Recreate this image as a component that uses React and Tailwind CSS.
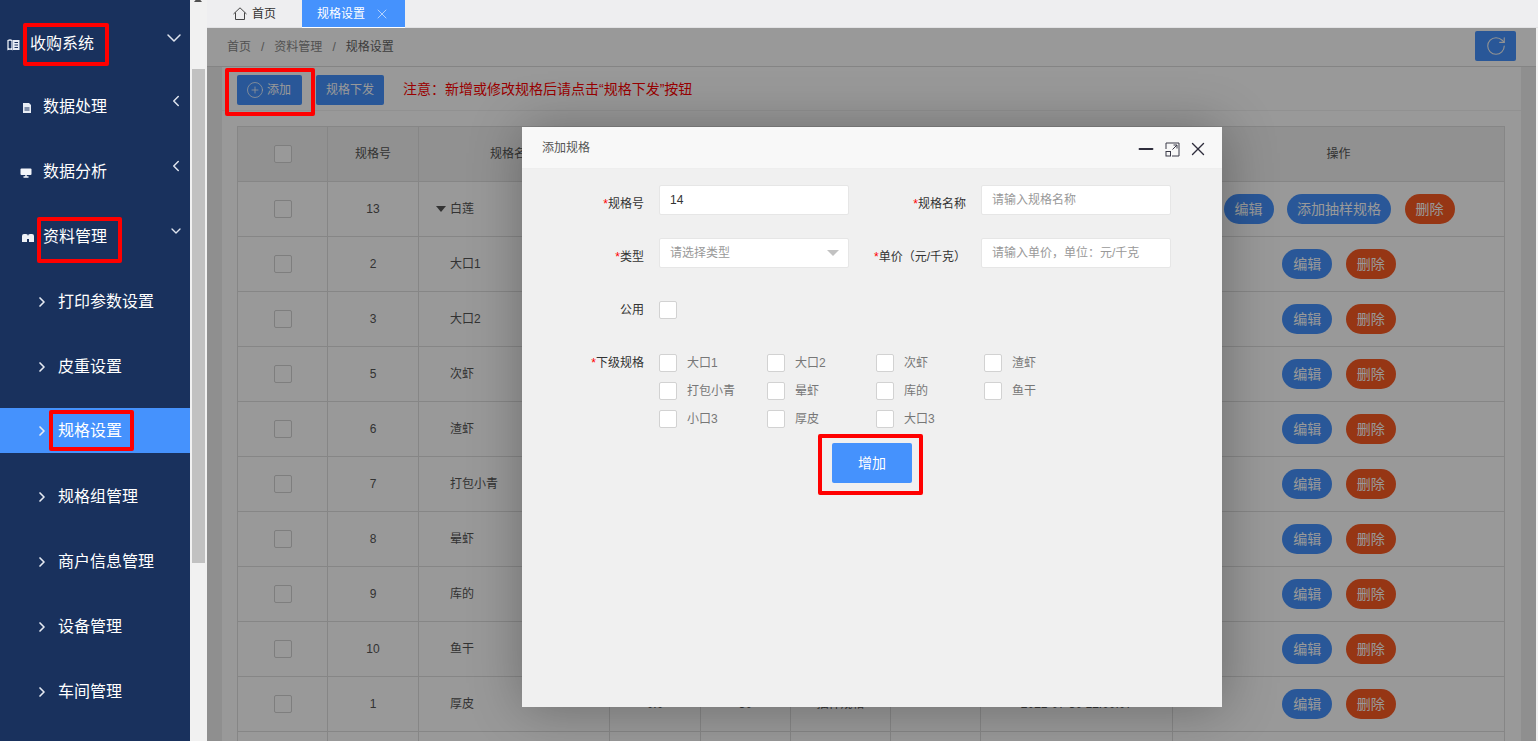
import { ChevronDown, ChevronLeft, ChevronRight, X, CirclePlus, RotateCw, Minus } from 'lucide-react';

const font = "font-['Liberation_Sans','Noto_Sans_CJK_SC',sans-serif]";

const subMenu = ['打印参数设置', '皮重设置', '规格设置', '规格组管理', '商户信息管理', '设备管理', '车间管理'];

const rows = [
  { no: '13', name: '白莲', tree: true, extra: true },
  { no: '2', name: '大口1' },
  { no: '3', name: '大口2' },
  { no: '5', name: '次虾' },
  { no: '6', name: '渣虾' },
  { no: '7', name: '打包小青' },
  { no: '8', name: '晕虾' },
  { no: '9', name: '库的' },
  { no: '10', name: '鱼干' },
  { no: '1', name: '厚皮', price: '0.0', weight: '50', kind: '抽样规格', time: '2021-07-30 12:00:07' },
  { no: '', name: '' },
];

const children = ['大口1', '大口2', '次虾', '渣虾', '打包小青', '晕虾', '库的', '鱼干', '小口3', '厚皮', '大口3'];

function MenuIcon({ type }) {
  if (type === 'book') {
    return (
      <svg width="13" height="12" viewBox="0 0 13 12" fill="none" className="shrink-0">
        <path d="M1 1.5q2-1 4 0v9q-2-1-4 0z" stroke="#e8edf5" strokeWidth="1.3" />
        <rect x="6" y="1" width="6.5" height="10" fill="#e8edf5" />
        <path d="M7.5 3.5h3.5M7.5 6h3.5M7.5 8.5h3.5" stroke="#19315d" />
      </svg>
    );
  }
  if (type === 'file') {
    return (
      <svg width="10" height="10" viewBox="0 0 10 10" className="shrink-0">
        <path d="M1 0h6l2 2v8H1z" fill="#e8edf5" />
        <path d="M2.5 5h5M2.5 7h5" stroke="#19315d" />
      </svg>
    );
  }
  if (type === 'screen') {
    return (
      <svg width="12" height="10" viewBox="0 0 12 10" className="shrink-0">
        <rect x="0.5" y="0.5" width="11" height="6.5" rx="1" fill="#f4f6fa" />
        <path d="M3.5 9h5M6 7v2" stroke="#f4f6fa" strokeWidth="1.4" />
      </svg>
    );
  }
  return (
    <svg width="14" height="10" viewBox="0 0 14 10" className="shrink-0">
      <path d="M1 9V3q0-2 2-2h2q2 0 2 2q0-2 2-2h2q2 0 2 2v6H8V6H6v3z" fill="#eef1f6" />
    </svg>
  );
}

function RedBox({ className, children }) {
  return <div className={`border-[4px] border-[#f00] rounded-[2px] ${className}`}>{children}</div>;
}

function Sidebar() {
  return (
    <aside className="w-[190px] h-full shrink-0 bg-[#19315d] text-white overflow-hidden">
      <div className="h-[74px] pt-[14px] flex items-center relative">
        <div className="ml-[7px] mr-[10px] mt-[1px]"><MenuIcon type="book" /></div>
        <span className="text-[16px]">收购系统</span>
        <ChevronDown size={24} strokeWidth={1.5} className="absolute left-[162px] top-[26px] text-[#dfe4ee]" />
      </div>
      {[
        ['file', '数据处理'],
        ['screen', '数据分析'],
      ].map(([icon, label]) => (
        <div key={label} className="h-[65px] flex items-center relative">
          <div className="w-[43px] flex justify-end pr-[11px] mt-[2px]"><MenuIcon type={icon} /></div>
          <span className="text-[16px]">{label}</span>
          <ChevronLeft size={18} strokeWidth={2} className="absolute left-[167px] top-[18px] text-[#dfe4ee]" />
        </div>
      ))}
      <div className="h-[65px] flex items-center relative">
        <div className="w-[43px] flex justify-end pr-[8px] mt-[2px]"><MenuIcon type="car" /></div>
        <span className="text-[16px]">资料管理</span>
        <ChevronDown size={16} strokeWidth={2} className="absolute left-[168px] top-[19px] text-[#dfe4ee]" />
      </div>
      {subMenu.map((label, i) => (
        <div key={label} className={`h-[65px] ${i === 2 ? 'pt-[9px]' : ''}`}>
          <div className={`flex items-center ${i === 2 ? 'h-[45px] bg-[#4592fd]' : 'h-[65px]'}`}>
            <ChevronRight size={16} strokeWidth={2.5} className="ml-[34px] mr-[8px] text-[#e6eaf2]" />
            <span className="text-[16px]">{label}</span>
          </div>
        </div>
      ))}
    </aside>
  );
}

function Pill({ color, children, className = '' }) {
  return (
    <button className={`h-[30px] rounded-[15px] text-[14px] text-white ${color} ${className}`}>{children}</button>
  );
}

function Check() {
  return <span className="block w-[18px] h-[18px] rounded-[2px] border shrink-0 bg-white border-[#d2d2d2]" />;
}

function SpecTable() {
  const cell = 'border-r border-b border-[#e0e0e0] flex items-center justify-center';
  return (
    <div className="border-l border-t border-[#e0e0e0] w-[1268px] text-[12px] text-[#555]">
      <div className="flex h-[55px] bg-[#f2f2f2]">
        <div className={`${cell} w-[90px]`}><Check /></div>
        <div className={`${cell} w-[91px]`}>规格号</div>
        <div className={`${cell} w-[191px]`}>规格名称</div>
        <div className={`${cell} w-[91px]`}>单价</div>
        <div className={`${cell} w-[90px]`}>重量</div>
        <div className={`${cell} w-[100px]`}>类型</div>
        <div className={`${cell} w-[90px]`}>公用</div>
        <div className={`${cell} w-[192px]`}>创建时间</div>
        <div className={`${cell} flex-1`}>操作</div>
      </div>
      {rows.map((r, i) => (
        <div key={i} className="flex h-[55px] bg-white">
          <div className={`${cell} w-[90px]`}><Check /></div>
          <div className={`${cell} w-[91px]`}>{r.no}</div>
          <div className={`${cell} w-[191px] !justify-start pl-[17px]`}>
            {r.tree
              ? <span className="w-0 h-0 mr-[4px] border-x-[5px] border-t-[6px] border-x-transparent border-t-[#555]" />
              : <span className="w-[14px]" />}
            <span>{r.name}</span>
          </div>
          <div className={`${cell} w-[91px]`}>{r.price}</div>
          <div className={`${cell} w-[90px]`}>{r.weight}</div>
          <div className={`${cell} w-[100px]`}>{r.kind}</div>
          <div className={`${cell} w-[90px]`} />
          <div className={`${cell} w-[192px]`}>{r.time}</div>
          <div className={`${cell} flex-1 gap-[13.5px] pl-[1px]`}>
            {r.no && <Pill color="bg-[#4592fd]" className="w-[50px]">编辑</Pill>}
            {r.extra && <Pill color="bg-[#4592fd]" className="w-[104px]">添加抽样规格</Pill>}
            {r.no && <Pill color="bg-[#fb5a22]" className="w-[50px]">删除</Pill>}
          </div>
        </div>
      ))}
    </div>
  );
}

function Field({ label, required, labelWidth, children }) {
  return (
    <div className="flex items-center">
      <label className={`${labelWidth} text-right text-[12px] text-[#333] whitespace-nowrap pt-[8px]`}>
        {required && <span className="text-[#f00]">*</span>}
        {label}
      </label>
      {children}
    </div>
  );
}

function TextBox({ value, placeholder, select }) {
  return (
    <div className={`ml-[15px] w-[190px] h-[30px] bg-white border border-[#e6e6e6] rounded-[2px] pl-[10px] flex items-center text-[12px] relative ${value ? 'text-[#333]' : 'text-[#999]'}`}>
      {value || placeholder}
      {select && <span className="absolute right-[9px] top-[11px] w-0 h-0 border-x-[6px] border-t-[6px] border-x-transparent border-t-[#c2c2c2]" />}
    </div>
  );
}

function Dialog() {
  return (
    <div className="absolute left-[315px] top-[99px] w-[700px] h-[580px] bg-[#f0f0f0] shadow-[1px_1px_50px_rgba(0,0,0,0.3)]">
      <div className="h-[42px] bg-[#f8f8f8] border-b border-[#eee] flex items-center pl-[20px] text-[12px] text-[#555] relative">
        添加规格
        <div className="absolute left-[613px] top-[11px] flex items-center text-[#2e2d3c]">
          <Minus size={22} strokeWidth={2.2} />
          <svg width="15" height="15" viewBox="0 0 15 15" fill="none" stroke="#3a3a48" strokeWidth="1" className="ml-[8px] mr-[7px]">
            <path d="M1 7V1h13v13H7" />
            <rect x="1" y="9.5" width="4.5" height="4.5" />
            <path d="M7.5 7.5L12 3M8.5 3H12v3.5" />
          </svg>
          <X size={22} strokeWidth={1.5} />
        </div>
      </div>
      <div className="pt-[16px]">
        <div className="flex h-[30px]">
          <Field label="规格号" required labelWidth="w-[122px]"><TextBox value="14" /></Field>
          <Field label="规格名称" required labelWidth="w-[117px]"><TextBox placeholder="请输入规格名称" /></Field>
        </div>
        <div className="flex h-[30px] mt-[23px]">
          <Field label="类型" required labelWidth="w-[122px]"><TextBox placeholder="请选择类型" select /></Field>
          <Field label="单价（元/千克）" required labelWidth="w-[117px]"><TextBox placeholder="请输入单价，单位：元/千克" /></Field>
        </div>
        <div className="flex items-center mt-[33px] h-[18px]">
          <label className="w-[122px] text-right text-[12px] text-[#333]">公用</label>
          <div className="ml-[15px]"><Check /></div>
        </div>
        <div className="flex mt-[35px]">
          <label className="w-[122px] text-right text-[12px] text-[#333] leading-[18px] whitespace-nowrap">
            <span className="text-[#f00]">*</span>下级规格
          </label>
          <div className="ml-[15px] grid grid-cols-[108px_109px_108px_108px] gap-y-[10px]">
            {children.map((c) => (
              <div key={c} className="flex items-center gap-[10px] text-[12px] text-[#777] leading-[18px]">
                <Check />
                {c}
              </div>
            ))}
          </div>
        </div>
        <div className="flex justify-center mt-[15px]">
          <button className="w-[80px] h-[40px] rounded-[2px] bg-[#4592fd] text-white text-[14px]">增加</button>
        </div>
      </div>
    </div>
  );
}

export default function App() {
  return (
    <div className={`${font} w-[1538px] h-[741px] flex overflow-hidden relative bg-white`}>
      <Sidebar />
      {/* outer scrollbar */}
      <div className="w-[17px] h-full shrink-0 bg-[#f1f1f1] relative">
        <div className="absolute top-[-3px] left-[4px] w-0 h-0 border-x-[4px] border-b-[5px] border-x-transparent border-b-[#505050]" />
        <div className="absolute left-[2px] top-[69px] w-[13px] h-[494px] bg-[#c1c1c1]" />
      </div>
      <div className="flex-1 min-w-0 h-full flex flex-col">
        <div className="h-[28px] bg-[#eeeef0] border-b border-[#e2e2e4] flex text-[12px] shrink-0">
          <div className="w-[95px] h-[27px] flex items-center pl-[26px] gap-[5px] text-[#333]">
            <svg width="14" height="13" viewBox="0 0 14 13" fill="none" stroke="#444" strokeWidth="1">
              <path d="M0.5 7L7 0.8L13.5 7" />
              <path d="M2.5 5.5v7h9v-7" />
            </svg>
            首页
          </div>
          <div className="w-[103px] h-[28px] bg-[#4592fd] border-b border-white text-white flex items-center pl-[15px] gap-[9px]">
            规格设置
            <X size={16} strokeWidth={1.2} className="text-[#cfe1fb]" />
          </div>
        </div>
        <div className="flex-1 min-h-0 flex">
          <div className="w-[1329px] shrink-0 relative overflow-hidden bg-white">
            <div className="h-[39px] bg-white border-b border-[#ddd] flex items-center pl-[20px] text-[12px] text-[#888] relative">
              <span>首页</span>
              <span className="mx-[10px]">/</span>
              <span>资料管理</span>
              <span className="mx-[10px]">/</span>
              <span className="text-[#666]">规格设置</span>
              <button className="absolute left-[1268px] top-[3px] w-[41px] h-[30px] rounded-[2px] bg-[#4592fd] flex items-center justify-center text-[#f4f4f4]">
                <RotateCw size={22} strokeWidth={1.2} />
              </button>
            </div>
            <div className="flex h-full">
              <div className="w-[15px] bg-[#eeeeee] shrink-0" />
              <div className="w-[1299px] shrink-0">
                <div className="h-[44px] border-b border-[#f2f2f2] flex items-center pl-[15px] pt-[2px] text-[12px]">
                  <button className="w-[65px] h-[30px] rounded-[2px] bg-[#4592fd] text-white text-[12px] flex items-center pl-[9px] gap-[3px]">
                    <CirclePlus size={18} strokeWidth={1} />
                    添加
                  </button>
                  <button className="ml-[14px] w-[68px] h-[30px] rounded-[2px] bg-[#4592fd] text-white">规格下发</button>
                  <span className="ml-[19px] text-[14px] text-[#f00]">注意：新增或修改规格后请点击“规格下发”按钮</span>
                </div>
                <div className="pl-[15px] pt-[15px]"><SpecTable /></div>
              </div>
              <div className="flex-1 bg-[#eeeeee]" />
            </div>
            {/* layer shade */}
            <div className="absolute inset-0 bg-black/40" />
            <Dialog />
          </div>
          <div className="flex-1 bg-[#f1f1f1]" />
        </div>
      </div>
      {/* annotation boxes drawn on top of the screenshot */}
      <RedBox className="absolute left-[23px] top-[23px] w-[86px] h-[43px]" />
      <RedBox className="absolute left-[37px] top-[217px] w-[85px] h-[46px]" />
      <RedBox className="absolute left-[49px] top-[410px] w-[85px] h-[41px]" />
      <RedBox className="absolute left-[225px] top-[68px] w-[90px] h-[48px]" />
      <RedBox className="absolute left-[818px] top-[434px] w-[105px] h-[61px]" />
    </div>
  );
}
